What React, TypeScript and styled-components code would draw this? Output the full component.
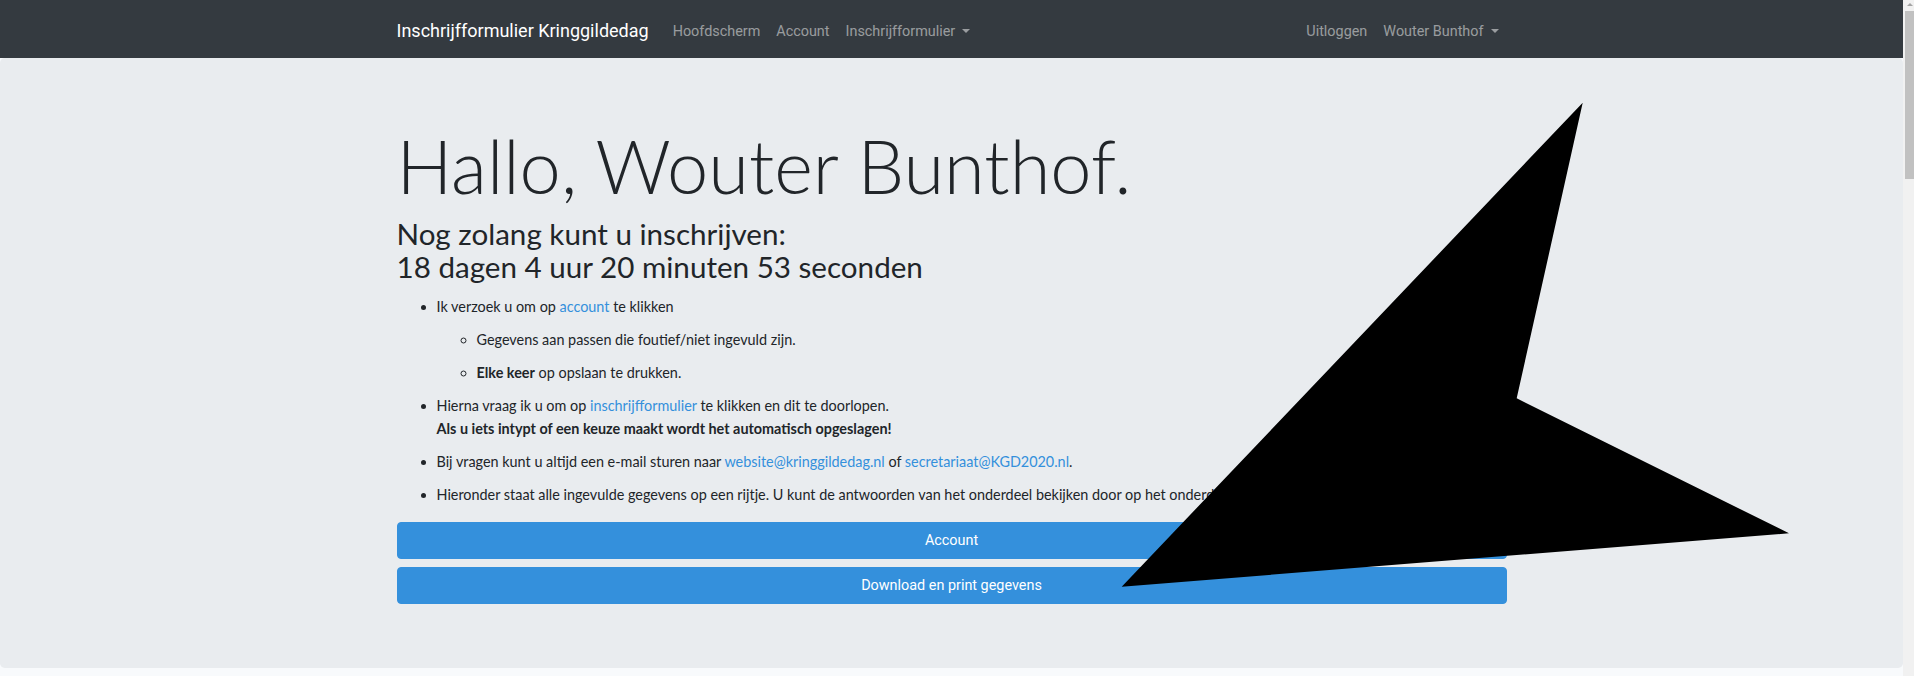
import React from "react";
import styled, { createGlobalStyle } from "styled-components";

const Global = createGlobalStyle`
  html, body { margin: 0; padding: 0; }
  body {
    background: #f8fafc;
    font-family: "Lato", "Noto Sans", sans-serif;
    font-size: 14.4px;
    line-height: 1.6;
    color: #212529;
    overflow: hidden;
  }
  *, *::before, *::after { box-sizing: border-box; }
`;

const Root = styled.div`
  display: flex;
  height: 676px;
  overflow: hidden;
`;

const Main = styled.div`
  position: relative;
  flex: 1;
  min-width: 0;
`;

const ScrollBar = styled.div`
  width: 11px;
  flex: none;
  background: #f1f1f1;
  display: flex;
  flex-direction: column;
`;

const ScrollArrow = styled.div`
  height: 11px;
  margin-left: 2px;
  display: flex;
  align-items: center;
  justify-content: center;
  &::before {
    content: "";
    border-bottom: 3px solid #a3a3a3;
    border-left: 3px solid transparent;
    border-right: 3px solid transparent;
    margin-top: -3px;
  }
`;

const ScrollThumb = styled.div`
  height: 168px;
  margin-left: 2px;
  background: #c1c1c1;
`;

const Navbar = styled.nav`
  background: #343a40;
  padding: 8px 16px;
`;

const Container = styled.div`
  max-width: 1140px;
  margin: 0 auto;
  padding: 0 15px;
`;

const NavRow = styled(Container)`
  display: flex;
  align-items: center;
`;

const Brand = styled.a`
  font-family: "Roboto", "Liberation Sans", sans-serif;
  font-size: 18px;
  line-height: 32px;
  padding: 7px 0 3px;
  margin-right: 16px;
  color: #fff;
  white-space: nowrap;
  text-decoration: none;
`;

const NavList = styled.div<{ $right?: boolean }>`
  display: flex;
  align-items: center;
  margin-left: ${(p) => (p.$right ? "auto" : "0")};
`;

const NavLink = styled.a<{ $caret?: boolean }>`
  font-family: "Roboto", "Liberation Sans", sans-serif;
  font-size: 14.4px;
  line-height: 23px;
  padding: 10px 8px 6px;
  color: rgba(255, 255, 255, 0.5);
  text-decoration: none;
  white-space: nowrap;
  &::after {
    content: ${(p) => (p.$caret ? "''" : "none")};
    display: inline-block;
    margin-left: 7px;
    vertical-align: 3px;
    border-top: 4.3px solid;
    border-right: 4.3px solid transparent;
    border-left: 4.3px solid transparent;
  }
`;

const Jumbotron = styled.section`
  background: #e9ecef;
  padding: 64px 32px;
  border-radius: 4.8px;
  margin-bottom: 32px;
`;

const Inner = styled.div`
  max-width: 1110px;
  margin: 0 auto;
`;

const Title = styled.h1`
  margin: 0 0 6px;
  font-family: "Lato", sans-serif;
  font-weight: 300;
  font-size: 74px;
  line-height: 1.2;
  color: #212529;
`;

const Countdown = styled.h2`
  margin: 0 0 12px;
  font-weight: 400;
  font-size: 29.6px;
  line-height: 1.12;
`;

const List = styled.ul`
  margin: 0 0 16px;
  padding-left: 40px;
  list-style: disc;
`;

const Item = styled.li`
  margin-bottom: 10px;
`;

const SubList = styled.ul`
  margin: 10px 0 0;
  padding-left: 40px;
  list-style: circle;
`;

const Link = styled.a`
  color: #3490dc;
  text-decoration: none;
`;

const Strong = styled.b`
  font-weight: 700;
`;

const Button = styled.button<{ $gap?: boolean }>`
  display: block;
  width: 100%;
  margin-top: ${(p) => (p.$gap ? "8px" : "0")};
  padding: 6px 12px;
  font-family: "Roboto", "Liberation Sans", sans-serif;
  font-size: 14.4px;
  line-height: 23px;
  color: #fff;
  background: #3490dc;
  border: 1px solid #3490dc;
  border-radius: 4px;
  text-align: center;
`;

const Overlay = styled.svg`
  position: absolute;
  top: 0;
  left: 0;
  pointer-events: none;
`;

export default function App() {
  return (
    <>
      <Global />
      <Root>
        <Main>
          <Navbar>
            <NavRow>
              <Brand>Inschrijfformulier Kringgildedag</Brand>
              <NavList>
                <NavLink>Hoofdscherm</NavLink>
                <NavLink>Account</NavLink>
                <NavLink $caret>Inschrijfformulier</NavLink>
              </NavList>
              <NavList $right>
                <NavLink>Uitloggen</NavLink>
                <NavLink $caret>Wouter Bunthof</NavLink>
              </NavList>
            </NavRow>
          </Navbar>
          <Jumbotron>
            <Inner>
              <Title>Hallo, Wouter Bunthof.</Title>
              <Countdown>
                Nog zolang kunt u inschrijven:
                <br />
                18 dagen 4 uur 20 minuten 53 seconden
              </Countdown>
              <List>
                <Item>
                  Ik verzoek u om op <Link>account</Link> te klikken
                  <SubList>
                    <Item>Gegevens aan passen die foutief/niet ingevuld zijn.</Item>
                    <Item>
                      <Strong>Elke keer</Strong> op opslaan te drukken.
                    </Item>
                  </SubList>
                </Item>
                <Item>
                  Hierna vraag ik u om op <Link>inschrijfformulier</Link> te klikken en dit te doorlopen.
                  <br />
                  <Strong>Als u iets intypt of een keuze maakt wordt het automatisch opgeslagen!</Strong>
                </Item>
                <Item>
                  Bij vragen kunt u altijd een e-mail sturen naar <Link>website@kringgildedag.nl</Link> of{" "}
                  <Link>secretariaat@KGD2020.nl</Link>.
                </Item>
                <Item>
                  Hieronder staat alle ingevulde gegevens op een rijtje. U kunt de antwoorden van het onderdeel
                  bekijken door op het onderdeel te klikken.
                </Item>
              </List>
              <Button>Account</Button>
              <Button $gap>Download en print gegevens</Button>
            </Inner>
          </Jumbotron>
          <Overlay width="1903" height="676" viewBox="0 0 1903 676">
            <polygon points="1582.7,102.7 1516.7,398.3 1789,533.3 1121.7,586.7" fill="#000" />
          </Overlay>
        </Main>
        <ScrollBar>
          <ScrollArrow />
          <ScrollThumb />
        </ScrollBar>
      </Root>
    </>
  );
}
